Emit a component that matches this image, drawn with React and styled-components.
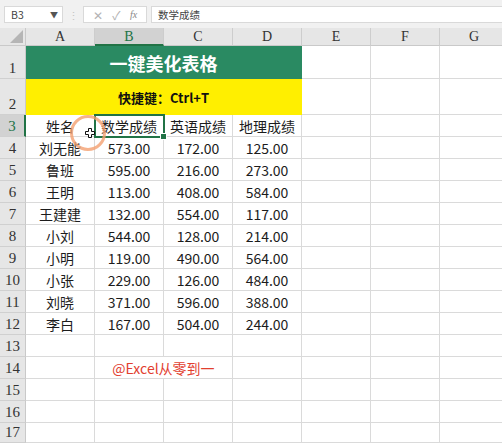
import React from 'react';
import styled, { createGlobalStyle } from 'styled-components';

const GlobalStyle = createGlobalStyle`
  html, body {
    margin: 0;
    padding: 0;
    background: #ffffff;
    overflow: hidden;
  }
  body {
    font-family: "Noto Sans CJK SC", "Noto Sans", sans-serif;
  }
`;

const COLS = ['A', 'B', 'C', 'D', 'E', 'F', 'G'];
const GREEN = '#2a8a62';
const YELLOW = '#ffef00';

const rows = [
  ['刘无能', '573.00', '172.00', '125.00'],
  ['鲁班', '595.00', '216.00', '273.00'],
  ['王明', '113.00', '408.00', '584.00'],
  ['王建建', '132.00', '554.00', '117.00'],
  ['小刘', '544.00', '128.00', '214.00'],
  ['小明', '119.00', '490.00', '564.00'],
  ['小张', '229.00', '126.00', '484.00'],
  ['刘晓', '371.00', '596.00', '388.00'],
  ['李白', '167.00', '504.00', '244.00']
];

const Page = styled.div`
  width: 502px;
  height: 443px;
  overflow: hidden;
  display: flex;
  flex-direction: column;
`;

const Toolbar = styled.div`
  height: 28px;
  flex: 0 0 28px;
  background: #f1f1f1;
  display: flex;
  align-items: flex-start;
  padding: 6px 0 0 4px;
  box-sizing: border-box;
`;

const Box = styled.div`
  height: 17px;
  box-sizing: border-box;
  background: #ffffff;
  border: 1px solid #d9d9d9;
  display: flex;
  align-items: center;
  font-size: 10.5px;
  color: #444;
`;

const NameBox = styled(Box)`
  width: 59px;
  padding: 0 4px 0 6px;
  justify-content: space-between;
`;

const Caret = styled.span`
  font-size: 8px;
  color: #555;
`;

const Dots = styled.div`
  width: 20px;
  height: 17px;
  display: flex;
  align-items: center;
  justify-content: center;
  color: #c4c4c4;
  font-size: 11px;
`;

const FnBox = styled(Box)`
  width: 64px;
  justify-content: space-around;
  padding: 0 4px;
  color: #b3b3b3;
  font-size: 12px;
`;

const Fx = styled.span`
  font-family: "Liberation Serif", serif;
  font-style: italic;
  font-size: 10px;
  color: #888;
`;

const FormulaBox = styled(Box)`
  flex: 1;
  margin-left: 4px;
  padding-left: 6px;
  border-right: none;
`;

const Sheet = styled.div`
  position: relative;
  display: grid;
  grid-template-columns: 26px repeat(7, 69px);
  grid-template-rows: 18px 33px 36px repeat(14, 22px);
  width: 509px;
`;

const Corner = styled.div`
  background: #e6e6e6;
  border-right: 1px solid #c9c9c9;
  border-bottom: 1px solid #c9c9c9;
  display: flex;
  align-items: flex-end;
  justify-content: flex-end;
  padding: 0 2px 2px 0;
  box-sizing: border-box;
`;

const ColHead = styled.div`
  background: ${p => (p.$active ? '#d2d2d2' : '#e6e6e6')};
  border-right: 1px solid #cdcdcd;
  border-bottom: ${p => (p.$active ? '2px solid #217346' : '1px solid #c9c9c9')};
  box-sizing: border-box;
  display: flex;
  align-items: center;
  justify-content: center;
  font-family: "Liberation Serif", "DejaVu Serif", serif;
  font-size: 14px;
  color: ${p => (p.$active ? '#217346' : '#333')};
  padding-top: 1px;
`;

const RowHead = styled.div`
  background: ${p => (p.$active ? '#d2d2d2' : '#e6e6e6')};
  border-right: ${p => (p.$active ? '2px solid #217346' : '1px solid #c9c9c9')};
  border-bottom: 1px solid #d0d0d0;
  box-sizing: border-box;
  display: flex;
  align-items: flex-end;
  justify-content: center;
  padding-bottom: 1px;
  font-family: "Liberation Serif", "DejaVu Serif", serif;
  font-size: 15px;
  line-height: 18px;
  color: ${p => (p.$active ? '#217346' : '#333')};
`;

const Cell = styled.div`
  grid-column: span ${p => p.$span || 1};
  position: relative;
  box-sizing: border-box;
  background: ${p => p.$fill || '#ffffff'};
  border-right: 1px solid ${p => p.$fill || '#dadada'};
  border-bottom: 1px solid ${p => p.$fill || '#dadada'};
  display: flex;
  align-items: center;
  justify-content: center;
  font-size: ${p => p.$size || 14}px;
  font-weight: ${p => (p.$bold ? 700 : 400)};
  color: ${p => p.$color || '#1c1c1c'};
  white-space: nowrap;
  padding-top: 1px;
  outline: ${p => (p.$selected ? '2px solid #217346' : 'none')};
  outline-offset: -1px;
  z-index: ${p => (p.$selected ? 1 : 0)};

  &::after {
    content: '';
    display: ${p => (p.$selected ? 'block' : 'none')};
    position: absolute;
    right: -4px;
    bottom: -4px;
    width: 5px;
    height: 5px;
    background: #217346;
    border: 1px solid #ffffff;
  }
`;

const ClickRing = styled.div`
  position: absolute;
  left: 70px;
  top: 87px;
  width: 36px;
  height: 36px;
  box-sizing: border-box;
  border-radius: 50%;
  border: 3px solid rgba(244, 160, 112, 0.8);
  z-index: 2;
`;

const Pointer = styled.svg`
  position: absolute;
  left: 85px;
  top: 100px;
  z-index: 3;
`;

const Triangle = () => (
  <svg width="13" height="13" viewBox="0 0 13 13">
    <polygon points="13,0 13,13 0,13" fill="#b5b5b5" />
  </svg>
);

const App = () => {
  const body = [];
  let r = 1;

  body.push(
    <RowHead key="h1">{r}</RowHead>,
    <Cell key="c1" $span={4} $fill={GREEN} $color="#ffffff" $bold $size={18}>
      一键美化表格
    </Cell>,
    ...[0, 1, 2].map(i => <Cell key={`e1${i}`} />)
  );
  r++;
  body.push(
    <RowHead key="h2">{r}</RowHead>,
    <Cell key="c2" $span={4} $fill={YELLOW} $bold $size={13} $color="#111">
      快捷键：Ctrl+T
    </Cell>,
    ...[0, 1, 2].map(i => <Cell key={`e2${i}`} />)
  );
  r++;
  const heads = ['姓名', '数学成绩', '英语成绩', '地理成绩'];
  body.push(<RowHead key="h3" $active>{r}</RowHead>);
  heads.forEach((h, i) => {
    body.push(
      <Cell key={`t${i}`} $selected={i === 1}>
        {h}
      </Cell>
    );
  });
  [0, 1, 2].forEach(i => body.push(<Cell key={`e3${i}`} />));
  r++;

  rows.forEach(row => {
    const n = r;
    body.push(<RowHead key={`h${n}`}>{n}</RowHead>);
    row.forEach((v, i) => body.push(<Cell key={`d${n}-${i}`}>{v}</Cell>));
    [0, 1, 2].forEach(i => body.push(<Cell key={`e${n}-${i}`} />));
    r++;
  });

  for (; r <= 17; r++) {
    const n = r;
    body.push(<RowHead key={`h${n}`}>{n}</RowHead>);
    if (n === 14) {
      body.push(
        <Cell key="a14" />,
        <Cell key="bc14" $span={2} $color="#e2402f">
          @Excel从零到一
        </Cell>,
        ...[0, 1, 2, 3].map(i => <Cell key={`e14-${i}`} />)
      );
    } else {
      COLS.forEach(c => body.push(<Cell key={`${c}${n}`} />));
    }
  }

  return (
    <Page>
      <GlobalStyle />
      <Toolbar>
        <NameBox>
          <span>B3</span>
          <Caret>▼</Caret>
        </NameBox>
        <Dots>⋮</Dots>
        <FnBox>
          <span>✕</span>
          <span>✓</span>
          <Fx>fx</Fx>
        </FnBox>
        <FormulaBox>数学成绩</FormulaBox>
      </Toolbar>
      <Sheet>
        <Corner>
          <Triangle />
        </Corner>
        {COLS.map(c => (
          <ColHead key={c} $active={c === 'B'}>
            {c}
          </ColHead>
        ))}
        {body}
        <ClickRing />
        <Pointer width="10" height="10" viewBox="0 0 10 10">
          <path
            d="M3.5 0.5 H6.5 V3.5 H9.5 V6.5 H6.5 V9.5 H3.5 V6.5 H0.5 V3.5 H3.5 Z"
            fill="#ffffff"
            stroke="#111111"
            strokeWidth="1"
          />
        </Pointer>
      </Sheet>
    </Page>
  );
};

export default App;
